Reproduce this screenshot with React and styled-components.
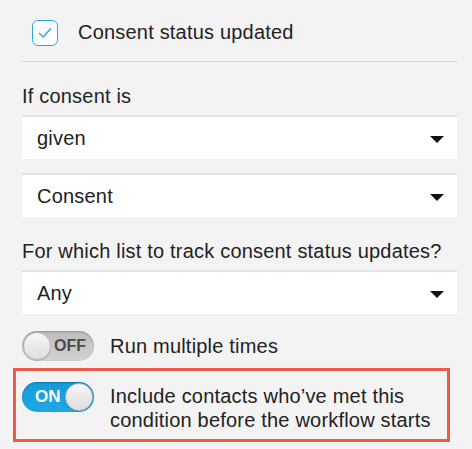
import React from "react"
import styled, { createGlobalStyle } from "styled-components"

const GlobalStyle = createGlobalStyle`
  html, body {
    margin: 0;
    padding: 0;
    background: #f3f3f3;
  }
  body {
    font-family: "Liberation Sans", Arial, Helvetica, sans-serif;
    color: #222;
  }
`

const Page = styled.div`
  width: 435px;
  padding: 0 15px 0 22px;
  font-size: 20px;
  letter-spacing: 0.2px;
`

const Header = styled.div`
  display: flex;
  align-items: center;
  gap: 20px;
  height: 57px;
  padding: 4px 0 0 10px;
  border-bottom: 1px solid #d6d6d6;
`

const CheckBox = styled.span`
  box-sizing: border-box;
  width: 26px;
  height: 26px;
  border: 1.5px solid #2ba6e1;
  border-radius: 6px;
  display: flex;
  align-items: center;
  justify-content: center;
  background: #fff;
`

const Label = styled.div`
  line-height: 22px;
  margin: 23px 0 8px;
`

const SelectBox = styled.div`
  box-sizing: border-box;
  height: 44px;
  background: #fff;
  border-top: 2px solid #e3e3e3;
  display: flex;
  align-items: center;
  justify-content: space-between;
  padding: 0 13px 0 15px;
  margin-bottom: ${p => p.$gap || 0}px;
`

const Arrow = styled.span`
  width: 0;
  height: 0;
  border-left: 7.5px solid transparent;
  border-right: 7.5px solid transparent;
  border-top: 7px solid #111;
  margin-top: 2px;
`

const ToggleRow = styled.div`
  display: flex;
  align-items: center;
  gap: 16px;
  margin-top: 17px;
`

const Highlight = styled.div`
  display: flex;
  align-items: flex-start;
  gap: 16px;
  margin: 7px 7px 0 -9px;
  padding: 11px 0 7px 6px;
  border: 3px solid #f05a4b;
  line-height: 24px;
`

const Track = styled.span`
  box-sizing: border-box;
  position: relative;
  flex: none;
  width: 72px;
  height: 30px;
  border-radius: 15px;
  display: flex;
  align-items: center;
  justify-content: ${p => (p.$on ? "flex-start" : "flex-end")};
  padding: ${p => (p.$on ? "0 0 0 13px" : "0 8px 0 0")};
  font-weight: bold;
  letter-spacing: 0;
  font-size: ${p => (p.$on ? "17px" : "16px")};
  color: ${p => (p.$on ? "#fff" : "#4a4a4a")};
  background: ${p =>
    p.$on
      ? "linear-gradient(#139bdc, #1fa7e4)"
      : "linear-gradient(#bdbdbd, #d2d2d2)"};
  box-shadow: inset 0 1px 2px rgba(0, 0, 0, 0.25);
`

const Knob = styled.span`
  position: absolute;
  top: 1px;
  ${p => (p.$on ? "right: 1px;" : "left: 1px;")}
  width: 28px;
  height: 28px;
  border-radius: 50%;
  box-sizing: border-box;
  border: 1px solid #b9b9b9;
  background: linear-gradient(#f6f6f6, #dedede);
  box-shadow: 0 1px 1px rgba(0, 0, 0, 0.15);
`

const HighlightText = styled.div`
  padding-top: 2px;
`

const Toggle = ({ on }) => (
  <Track $on={on}>
    {on ? "ON" : "OFF"}
    <Knob $on={on} />
  </Track>
)

const App = () => (
  <>
    <GlobalStyle />
    <Page>
      <Header>
        <CheckBox>
          <svg width="14" height="12" viewBox="0 0 14 12">
            <path d="M1.5 6.5 L5.2 10 L12.5 1.8" fill="none" stroke="#2ba6e1" strokeWidth="1.4" strokeLinecap="round" strokeLinejoin="round" />
          </svg>
        </CheckBox>
        Consent status updated
      </Header>
      <Label>If consent is</Label>
      <SelectBox $gap={14}>
        given
        <Arrow />
      </SelectBox>
      <SelectBox>
        Consent
        <Arrow />
      </SelectBox>
      <Label>For which list to track consent status updates?</Label>
      <SelectBox>
        Any
        <Arrow />
      </SelectBox>
      <ToggleRow>
        <Toggle on={false} />
        Run multiple times
      </ToggleRow>
      <Highlight>
        <Toggle on />
        <HighlightText>
          Include contacts who’ve met this
          <br />
          condition before the workflow starts
        </HighlightText>
      </Highlight>
    </Page>
  </>
)

export default App
